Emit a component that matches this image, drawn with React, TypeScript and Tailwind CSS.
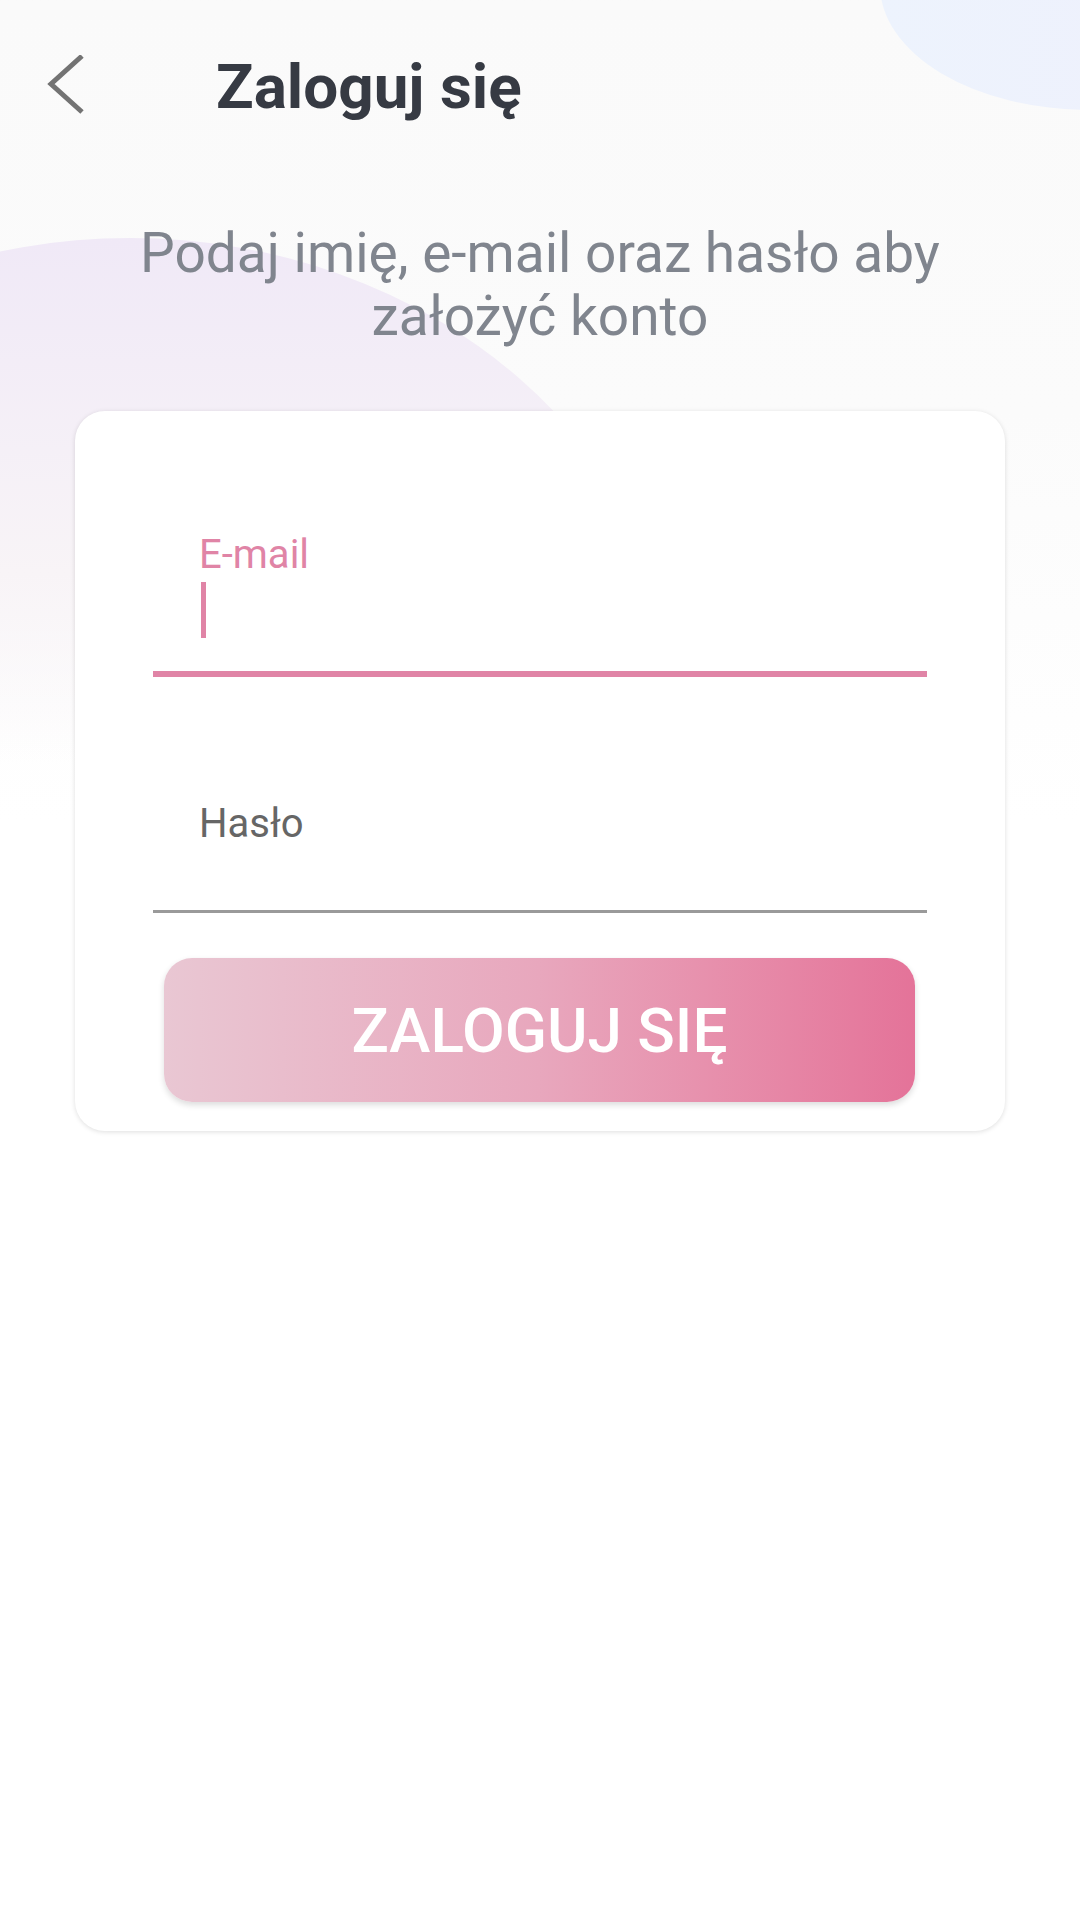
import { ChangeEvent, useState } from 'react';

// ekran logowania - kolory z makiety
const pink = '#e084a6';

export default function App() {
  const [email, setEmail] = useState('');
  const [password, setPassword] = useState('');

  return (
    <div
      className="relative min-h-[1920px] w-[1080px] overflow-hidden bg-white"
      style={{ fontFamily: 'Roboto, "Noto Sans", "Liberation Sans", sans-serif' }}
    >
      {/* tło */}
      <div className="absolute left-0 top-0 h-[820px] w-full bg-linear-to-b from-[#fafafa] via-[#fbfbfb] to-white" />
      <div className="absolute left-[-420px] top-[238px] h-[956px] w-[1100px] rounded-[50%] bg-linear-to-b from-[#f0e9f7] via-[#f8f4f7] via-35% to-white/0 to-55%" />
      <div className="absolute left-[880px] top-[-140px] h-[250px] w-[420px] rounded-[50%] bg-linear-to-r from-[#edf3fd] to-[#eff0fc]" />

      <div className="relative">
        {/* nagłówek */}
        <header className="flex items-start pl-[46px] pt-[55px]">
          <button className="h-[60px] w-[40px]" aria-label="Wstecz">
            <svg width="40" height="60" viewBox="0 0 40 60" fill="none">
              <path d="M36 1 L5 29 L36 57" stroke="#737373" strokeWidth="5" />
            </svg>
          </button>
          <h1 className="ml-[130px] mt-[1px] text-[62px] font-bold leading-none text-[#363a43]">
            Zaloguj się
          </h1>
        </header>

        <p className="mt-[104px] px-[100px] text-center text-[55px] leading-[63px] text-[#80858e]">
          Podaj imię, e-mail oraz hasło aby założyć konto
        </p>

        {/* karta formularza */}
        <div className="mx-[75px] mt-[63px] rounded-[30px] bg-white px-[78px] pb-[29px] pt-[124px] shadow-[0_1px_5px_rgba(0,0,0,0.13)]">
          <label className="block">
            <span className="block pl-[46px] text-[40px] leading-none" style={{ color: pink }}>
              E-mail
            </span>
            <div className="relative mt-[7px] h-[56px]">
              <div className="ml-[48px] h-[56px] w-[5px]" style={{ backgroundColor: pink }} />
              <input
                value={email}
                onChange={(e: ChangeEvent<HTMLInputElement>) => setEmail(e.target.value)}
                className="absolute inset-0 bg-transparent pl-[48px] text-[40px] text-[#333] caret-transparent outline-none"
              />
            </div>
            <div className="mt-[33px] h-[6px]" style={{ backgroundColor: pink }} />
          </label>

          <label className="mt-[127px] block">
            <span className="block pl-[46px] text-[40px] leading-none text-[#666666]">Hasło</span>
            <input
              type="password"
              value={password}
              onChange={(e: ChangeEvent<HTMLInputElement>) => setPassword(e.target.value)}
              className="mt-[10px] block h-[56px] w-full bg-transparent pl-[48px] text-[40px] outline-none"
            />
            <div className="h-[3px] bg-[#9a9a9a]" />
          </label>

          <button className="mx-[11px] mt-[45px] flex h-[144px] w-[751px] items-center justify-center rounded-[28px] bg-linear-to-r from-[#e9c7d3] via-[#e8a7bd] to-[#e47399] text-[62px] font-medium text-white shadow-[0_3px_6px_rgba(0,0,0,0.14)]">
            ZALOGUJ SIĘ
          </button>
        </div>
      </div>
    </div>
  );
}
